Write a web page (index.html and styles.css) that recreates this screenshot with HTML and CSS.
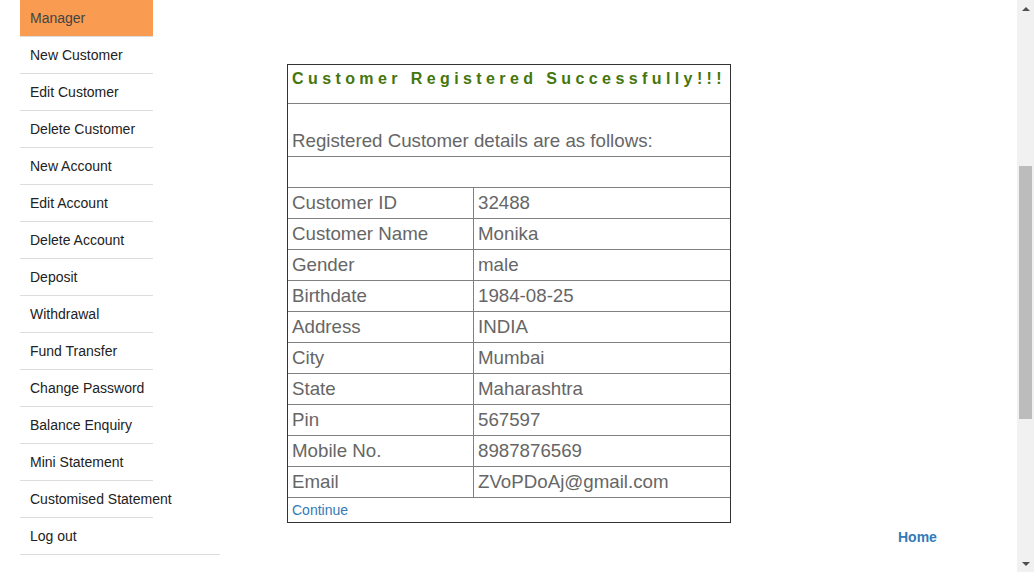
FILE: index.html
```html
<!DOCTYPE html>
<html>
<head>
<meta charset="utf-8">
<title>Guru99 Bank</title>
<link rel="stylesheet" href="styles.css">
</head>
<body>
<div class="page">
  <nav class="sidebar">
    <ul class="menu">
      <li class="item active">Manager</li>
      <li class="item"><a href="#">New Customer</a></li>
      <li class="item"><a href="#">Edit Customer</a></li>
      <li class="item"><a href="#">Delete Customer</a></li>
      <li class="item"><a href="#">New Account</a></li>
      <li class="item"><a href="#">Edit Account</a></li>
      <li class="item"><a href="#">Delete Account</a></li>
      <li class="item"><a href="#">Deposit</a></li>
      <li class="item"><a href="#">Withdrawal</a></li>
      <li class="item"><a href="#">Fund Transfer</a></li>
      <li class="item"><a href="#">Change Password</a></li>
      <li class="item"><a href="#">Balance Enquiry</a></li>
      <li class="item"><a href="#">Mini Statement</a></li>
      <li class="item"><a href="#">Customised Statement</a></li>
      <li class="item wide"><a href="#">Log out</a></li>
    </ul>
  </nav>
  <main class="main">
    <div class="card">
      <div class="row heading">Customer Registered Successfully!!!</div>
      <div class="row intro">Registered Customer details are as follows:</div>
      <div class="row blank"></div>
      <div class="row data"><div class="key">Customer ID</div><div class="val">32488</div></div>
      <div class="row data"><div class="key">Customer Name</div><div class="val">Monika</div></div>
      <div class="row data"><div class="key">Gender</div><div class="val">male</div></div>
      <div class="row data"><div class="key">Birthdate</div><div class="val">1984-08-25</div></div>
      <div class="row data"><div class="key">Address</div><div class="val">INDIA</div></div>
      <div class="row data"><div class="key">City</div><div class="val">Mumbai</div></div>
      <div class="row data"><div class="key">State</div><div class="val">Maharashtra</div></div>
      <div class="row data"><div class="key">Pin</div><div class="val">567597</div></div>
      <div class="row data"><div class="key">Mobile No.</div><div class="val">8987876569</div></div>
      <div class="row data"><div class="key">Email</div><div class="val">ZVoPDoAj@gmail.com</div></div>
      <div class="row cont"><a href="#">Continue</a></div>
    </div>
    <div class="footer"><a class="home" href="#">Home</a></div>
  </main>
</div>
<div class="scrollbar">
  <div class="arrow up"></div>
  <div class="track"><div class="thumb"></div></div>
  <div class="arrow down"></div>
</div>
</body>
</html>
```

FILE: styles.css
```css
html, body {
  margin: 0;
  padding: 0;
  height: 572px;
  overflow: hidden;
  background: #fff;
  font-family: "Liberation Sans", Arial, sans-serif;
}
a { text-decoration: none; }

.page {
  display: flex;
  align-items: flex-start;
}

.sidebar {
  margin-left: 20px;
  width: 200px;
}
.menu {
  list-style: none;
  margin: 0;
  padding: 0;
}
.item {
  width: 133px;
  height: 36px;
  border-bottom: 1px solid #dddddd;
  display: flex;
  align-items: center;
  font-size: 14px;
  white-space: nowrap;
}
.item a {
  padding-left: 10px;
  color: #222;
}
.item.active {
  background: #f99b50;
  color: #444;
  padding-left: 10px;
  width: 123px;
}
.item.wide { width: 200px; }

.main {
  margin-left: 67px;
  margin-top: 64px;
  display: flex;
  flex-direction: column;
}
.card {
  width: 442px;
  border: 1px solid #333;
  color: #666;
}
.row {
  border-top: 1px solid #808080;
  box-sizing: border-box;
}
.row:first-child { border-top: none; }
.heading {
  height: 38px;
  padding: 5px 0 0 4px;
  font-size: 16px;
  font-weight: bold;
  letter-spacing: 4.4px;
  color: #44760d;
  white-space: nowrap;
}
.intro {
  height: 53px;
  padding: 26px 0 0 4px;
  font-size: 18.72px;
}
.blank { height: 31px; }
.data {
  height: 31px;
  display: flex;
  font-size: 18.72px;
}
.key {
  width: 186px;
  border-right: 1px solid #808080;
  padding-left: 4px;
  box-sizing: border-box;
  display: flex;
  align-items: center;
}
.val {
  padding-left: 4px;
  display: flex;
  align-items: center;
}
.cont {
  height: 25px;
  padding-left: 4px;
  display: flex;
  align-items: center;
  font-size: 14px;
}
.cont a { color: #337ab7; }

.footer {
  margin-top: 5px;
  padding-left: 611px;
}
.home {
  font-size: 14px;
  font-weight: bold;
  color: #337ab7;
}

.scrollbar {
  position: fixed;
  top: 0;
  right: 0;
  width: 17px;
  height: 572px;
  background: #f1f1f1;
  display: flex;
  flex-direction: column;
}
.arrow {
  height: 17px;
  display: flex;
  align-items: center;
  justify-content: center;
}
.arrow.up::before {
  content: "";
  border-left: 4px solid transparent;
  border-right: 4px solid transparent;
  border-bottom: 4px solid #505050;
}
.arrow.down::before {
  content: "";
  border-left: 4px solid transparent;
  border-right: 4px solid transparent;
  border-top: 4px solid #505050;
}
.track {
  flex: 1;
  padding-top: 149px;
}
.thumb {
  margin-left: 2px;
  width: 13px;
  height: 253px;
  background: #bcbcbc;
}
```
